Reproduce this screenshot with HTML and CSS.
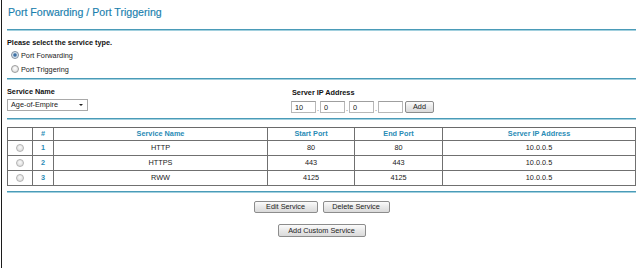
FILE: index.html
```html
<!DOCTYPE html>
<html>
<head>
<meta charset="utf-8">
<title>Port Forwarding / Port Triggering</title>
<link rel="stylesheet" href="styles.css">
</head>
<body>
<div class="page">
  <h1 class="title">Port Forwarding / Port Triggering</h1>
  <div class="rule rule-1"></div>

  <div class="type">
    <div class="label">Please select the service type.</div>
    <div class="radio-line"><span class="radio checked"></span><span>Port Forwarding</span></div>
    <div class="radio-line"><span class="radio"></span><span>Port Triggering</span></div>
  </div>
  <div class="rule rule-2"></div>

  <div class="fields">
    <div class="field field-name">
      <div class="label">Service Name</div>
      <div class="select"><span>Age-of-Empire</span><span class="arrow"></span></div>
    </div>
    <div class="field field-ip">
      <div class="label">Server IP Address</div>
      <div class="ip-row">
        <input class="ip" type="text" value="10">
        <span class="dot">.</span>
        <input class="ip" type="text" value="0">
        <span class="dot">.</span>
        <input class="ip" type="text" value="0">
        <span class="dot">.</span>
        <input class="ip" type="text" value="">
        <button class="btn btn-add">Add</button>
      </div>
    </div>
  </div>
  <div class="rule rule-3"></div>

  <table class="services">
    <colgroup>
      <col class="c-sel"><col class="c-num"><col class="c-name"><col class="c-start"><col class="c-end"><col class="c-ip">
    </colgroup>
    <thead>
      <tr><th></th><th>#</th><th>Service Name</th><th>Start Port</th><th>End Port</th><th>Server IP Address</th></tr>
    </thead>
    <tbody>
      <tr><td><span class="radio light"></span></td><td class="num">1</td><td>HTTP</td><td>80</td><td>80</td><td>10.0.0.5</td></tr>
      <tr><td><span class="radio light"></span></td><td class="num">2</td><td>HTTPS</td><td>443</td><td>443</td><td>10.0.0.5</td></tr>
      <tr><td><span class="radio light"></span></td><td class="num">3</td><td>RWW</td><td>4125</td><td>4125</td><td>10.0.0.5</td></tr>
    </tbody>
  </table>
  <div class="rule rule-4"></div>

  <div class="actions">
    <div class="btn-row row-1">
      <button class="btn btn-edit">Edit Service</button>
      <button class="btn btn-delete">Delete Service</button>
    </div>
    <div class="btn-row row-2">
      <button class="btn btn-custom">Add Custom Service</button>
    </div>
  </div>
</div>
</body>
</html>
```

FILE: styles.css
```css
html {
  background: #ffffff;
}

body {
  margin: 0 0 0 1px;
  border-left: 1px solid #1c1c1c;
  min-height: 268px;
  box-sizing: border-box;
  font-family: "Liberation Sans", Arial, sans-serif;
  font-size: 7.3px;
  color: #1a1a1a;
}

.page {
  padding: 0 4px 0 5px;
}

.title {
  margin: 0;
  padding-left: 1px;
  font-size: 10.6px;
  font-weight: normal;
  line-height: 24px;
  color: #1a80ae;
  -webkit-text-stroke: 0.15px #1a80ae;
}

.rule {
  height: 2px;
  background: linear-gradient(#4a9bb8 50%, #a2d0de 50%);
}

.rule-1 { margin-top: 5px; }
.rule-2 { margin-top: 2px; }
.rule-3 { margin-top: 5px; }
.rule-4 { margin-top: 5px; }

.label {
  font-weight: bold;
  color: #111111;
}

.type {
  padding-top: 6px;
}

.type .label {
  line-height: 11px;
}

.radio-line {
  display: flex;
  align-items: center;
  gap: 2px;
  height: 14px;
  padding-left: 4px;
}

.radio {
  display: inline-block;
  width: 8px;
  height: 8px;
  box-sizing: border-box;
  border-radius: 50%;
  border: 1px solid #9c9c9c;
  background: radial-gradient(circle at 50% 40%, #ffffff 0%, #e6e6e6 60%, #cfcfcf 100%);
}

.radio.checked {
  background: radial-gradient(circle at 50% 50%, #2f5f93 0%, #4a7db0 30%, #d9e4ee 55%, #ededed 100%);
  border-color: #7f8fa0;
}

.radio.light {
  border-color: #b3b3b3;
  background: radial-gradient(circle at 50% 40%, #fafafa 0%, #e3e3e3 60%, #d2d2d2 100%);
}

.fields {
  display: grid;
  grid-template-columns: 285px auto;
  padding-top: 6px;
}

.field .label {
  line-height: 12px;
}

.field-ip {
  padding-top: 1px;
}

.select {
  margin-top: 1px;
  width: 81px;
  height: 12px;
  box-sizing: border-box;
  border: 1px solid #a9a9a9;
  display: flex;
  align-items: center;
  justify-content: space-between;
  padding: 0 4px 0 3px;
  color: #222222;
  line-height: 10px;
}

.arrow {
  width: 0;
  height: 0;
  border-left: 2px solid transparent;
  border-right: 2px solid transparent;
  border-top: 2px solid #222222;
}

.ip-row {
  display: flex;
  align-items: flex-end;
  margin-top: 2px;
  margin-left: -1px;
}

.ip {
  width: 25px;
  height: 12px;
  box-sizing: border-box;
  margin: 0;
  padding: 0 0 0 3px;
  border: 1px solid #b8b8b8;
  border-top-color: #9f9f9f;
  font-family: "Liberation Sans", Arial, sans-serif;
  font-size: 7.3px;
  color: #222222;
  background: #ffffff;
  outline: none;
}

.dot {
  width: 4px;
  text-align: center;
  line-height: 9px;
  color: #555555;
}

.btn {
  margin: 0;
  padding: 0;
  height: 12px;
  box-sizing: border-box;
  border: 1px solid #8c8c8c;
  border-radius: 2px;
  background: linear-gradient(#fbfbfb, #e9e9e9 50%, #dadada);
  font-family: "Liberation Sans", Arial, sans-serif;
  font-size: 7.3px;
  line-height: 10px;
  color: #222222;
}

.btn-add {
  width: 29px;
  margin-left: 2px;
}

.services {
  margin-top: 7px;
  width: 100%;
  table-layout: fixed;
  border-collapse: separate;
  border-spacing: 0;
  border-top: 1px solid #6a6a6a;
  border-left: 1px solid #6a6a6a;
}

.c-sel { width: 25px; }
.c-num { width: 21px; }
.c-name { width: 214px; }
.c-start { width: 87px; }
.c-end { width: 88px; }

.services th,
.services td {
  padding: 0;
  border-right: 1px solid #707070;
  border-bottom: 1px solid #707070;
  text-align: center;
  vertical-align: middle;
}

.services th {
  height: 12px;
  line-height: 12px;
  font-weight: bold;
  color: #2a8cb6;
}

.services td {
  height: 14px;
  line-height: 14px;
  color: #1a1a1a;
}

.services td .radio {
  vertical-align: middle;
}

.services td.num {
  font-weight: bold;
  color: #2a8cb6;
}

.actions {
  display: flex;
  flex-direction: column;
  align-items: center;
}

.btn-row {
  display: flex;
  gap: 5px;
}

.row-1 { margin-top: 8px; }
.row-2 { margin-top: 11px; }

.btn-edit { width: 64px; }
.btn-delete { width: 67px; }
.btn-custom { width: 88px; height: 13px; }
```
